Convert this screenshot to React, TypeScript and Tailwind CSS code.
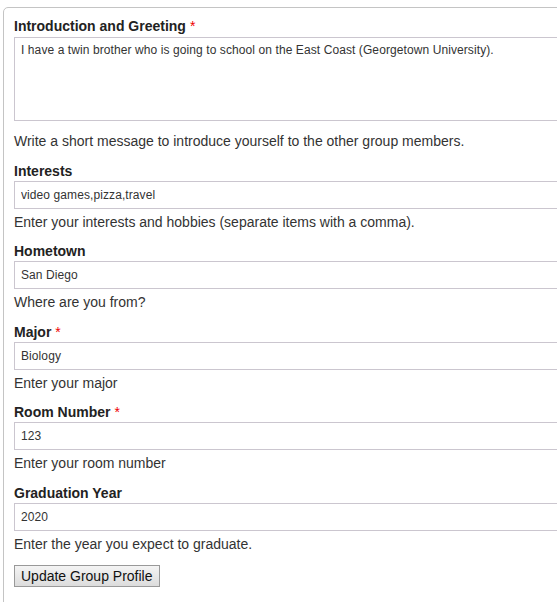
import type { ReactNode } from "react";

type Field = {
  label: string;
  required?: boolean;
  value: string;
  help: string;
};

const fields: Field[] = [
  {
    label: "Interests",
    value: "video games,pizza,travel",
    help: "Enter your interests and hobbies (separate items with a comma).",
  },
  { label: "Hometown", value: "San Diego", help: "Where are you from?" },
  { label: "Major", required: true, value: "Biology", help: "Enter your major" },
  {
    label: "Room Number",
    required: true,
    value: "123",
    help: "Enter your room number",
  },
  {
    label: "Graduation Year",
    value: "2020",
    help: "Enter the year you expect to graduate.",
  },
];

function Label({ children, required }: { children: ReactNode; required?: boolean }) {
  return (
    <div className="text-[14px] font-bold leading-[17px] text-[#222]">
      {children}
      {required && <span className="ml-[4px] font-normal text-[#e00]">*</span>}
    </div>
  );
}

function Help({ children }: { children: ReactNode }) {
  return <div className="text-[14px] leading-[17px] text-[#333]">{children}</div>;
}

export default function App() {
  return (
    <div className="h-screen w-full overflow-hidden bg-white font-['Liberation_Sans',Arial,sans-serif]">
      <div className="ml-[3px] mt-[7px] w-[640px] rounded-tl-[5px] border border-[#c4c4c4] pl-[10px] pt-[10px] pb-[40px]">
        {/* intro */}
        <Label required>Introduction and Greeting</Label>
        <textarea
          readOnly
          value="I have a twin brother who is going to school on the East Coast (Georgetown University)."
          className="mt-[2px] block h-[84px] w-[600px] resize-none border border-[#cbc6cf] bg-white px-[6px] py-[5px] text-[12px] leading-[14px] tracking-[0.09px] text-[#333] outline-none"
        />
        <div className="mt-[12px]">
          <Help>Write a short message to introduce yourself to the other group members.</Help>
        </div>

        {fields.map((f) => (
          <div key={f.label} className="mt-[12.5px]">
            <Label required={f.required}>{f.label}</Label>
            <input
              readOnly
              value={f.value}
              className="mt-px block h-[28px] w-[600px] border border-[#cbc6cf] bg-white px-[6px] text-[12px] tracking-[0.09px] text-[#333] outline-none"
            />
            <div className="mt-[5px]">
              <Help>{f.help}</Help>
            </div>
          </div>
        ))}

        <button
          type="button"
          className="mt-[12px] block h-[22px] border border-[#999] bg-gradient-to-b from-[#f4f4f4] to-[#dcdcdc] px-[6px] text-[14px] leading-[18px] text-[#111]"
        >
          Update Group Profile
        </button>
      </div>
    </div>
  );
}
